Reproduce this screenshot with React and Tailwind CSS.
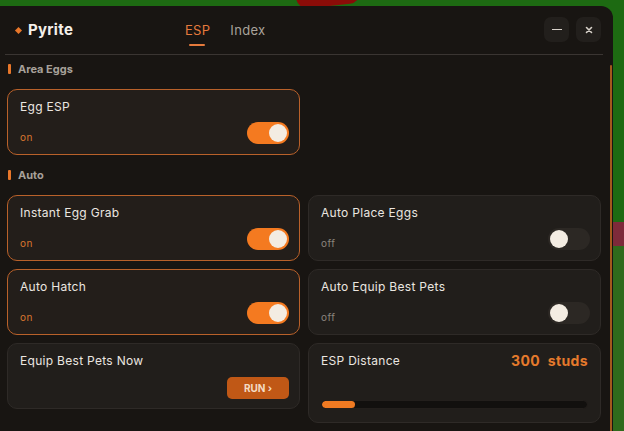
import { useState } from 'react';

const font = { fontFamily: 'Inter, "Noto Sans", sans-serif' };

const Toggle = ({ on, onClick }) => (
  <button
    onClick={onClick}
    className={`w-[42px] h-[22px] rounded-full flex items-center px-[2px] ${
      on ? 'bg-[#f47a20] justify-end' : 'bg-[#2c2824] justify-start'
    }`}
  >
    <span className="w-[18px] h-[18px] rounded-full bg-[#f3ece2]" />
  </button>
);

const ToggleCard = ({ title, on, onToggle }) => (
  <div
    className={`h-[66px] rounded-[10px] border flex flex-col justify-between pl-[12px] pr-[10px] pt-[9px] pb-[10px] ${
      on ? 'border-[#b9612a] bg-[#231e1a]' : 'border-[#2e2a27] bg-[#211e1b]'
    }`}
  >
    <div className="text-[12px] leading-[16px] text-[#ebe6e0] tracking-[0.3px]">{title}</div>
    <div className="flex items-end justify-between">
      <span className={`text-[10px] leading-[12px] mb-[1px] tracking-[0.5px] ${on ? 'text-[#d9762f]' : 'text-[#8b847d]'}`}>
        {on ? 'on' : 'off'}
      </span>
      <Toggle on={on} onClick={onToggle} />
    </div>
  </div>
);

const Section = ({ label }) => (
  <div className="flex items-center gap-[7px] h-[14px] pl-[1px]">
    <span className="w-[3px] h-[10px] bg-[#e8772a] rounded-[1px]" />
    <span className="text-[11px] font-bold text-[#a7a19a]">{label}</span>
  </div>
);

export default function App() {
  const [state, setState] = useState({
    eggEsp: true,
    instantGrab: true,
    autoPlace: false,
    autoHatch: true,
    autoEquip: false,
  });
  const [tab, setTab] = useState('ESP');
  const distance = 300;
  const flip = (k) => setState((s) => ({ ...s, [k]: !s[k] }));

  return (
    <div className="relative w-[624px] h-[431px] overflow-hidden bg-[#1d6a12]" style={font}>
      {/* game scene behind the window */}
      <div className="absolute left-[296px] -top-[16px] w-[64px] h-[22px] rounded-full -rotate-6 bg-[#8a0c08]" />
      <div className="absolute left-[612px] top-[222px] w-[20px] h-[24px] bg-[#7d2a3a]" />
      <div className="absolute left-[612px] top-[246px] w-[20px] h-[185px] bg-[#2f6a1c]" />

      {/* window */}
      <div className="absolute left-0 top-[6px] w-[613px] h-[440px] bg-[#181512] rounded-tr-[12px] flex flex-col">
        <div className="h-[48px] flex items-center px-[12px] relative">
          <div className="flex items-center gap-[7px] w-[170px]">
            <span className="w-[5px] h-[5px] rotate-45 bg-[#e8772a] ml-[4px]" />
            <span className="text-[15px] font-bold text-[#f4f0ea] tracking-[0.3px]">Pyrite</span>
          </div>
          <div className="flex items-center gap-[20px] ml-[3px] mt-[1px]">
            {['ESP', 'Index'].map((t) => (
              <button
                key={t}
                onClick={() => setTab(t)}
                className={`relative text-[13px] tracking-[0.3px] ${tab === t ? 'text-[#e57a3c]' : 'text-[#a9a39b]'}`}
              >
                {t}
                {tab === t && (
                  <span className="absolute left-[4px] right-[5px] -bottom-[6px] h-[2px] rounded bg-[#e57a3c]" />
                )}
              </button>
            ))}
          </div>
          <div className="ml-auto flex gap-[7px] -mt-[1px]">
            <button className="w-[25px] h-[25px] rounded-[7px] bg-[#221f1c] flex items-center justify-center">
              <span className="w-[10px] h-[1.5px] bg-[#d8d2ca]" />
            </button>
            <button className="w-[25px] h-[25px] rounded-[7px] bg-[#221f1c] flex items-center justify-center">
              <svg width="8" height="8" viewBox="0 0 8 8" stroke="#d8d2ca" strokeWidth="1.6" strokeLinecap="round">
                <path d="M1.5 1.5l5 5M6.5 1.5l-5 5" />
              </svg>
            </button>
          </div>
        </div>
        <div className="h-px bg-[#3a3532] ml-[5px] mr-[10px]" />

        <div className="flex-1 pl-[7px] pr-[12px] pt-[7px] relative">
          <Section label="Area Eggs" />
          <div className="grid grid-cols-2 gap-[8px] mt-[13px]">
            <ToggleCard title="Egg ESP" on={state.eggEsp} onToggle={() => flip('eggEsp')} />
          </div>

          <div className="mt-[13px]">
            <Section label="Auto" />
          </div>
          <div className="grid grid-cols-2 gap-[8px] mt-[13px] items-start">
            <ToggleCard title="Instant Egg Grab" on={state.instantGrab} onToggle={() => flip('instantGrab')} />
            <ToggleCard title="Auto Place Eggs" on={state.autoPlace} onToggle={() => flip('autoPlace')} />
            <ToggleCard title="Auto Hatch" on={state.autoHatch} onToggle={() => flip('autoHatch')} />
            <ToggleCard title="Auto Equip Best Pets" on={state.autoEquip} onToggle={() => flip('autoEquip')} />

            <div className="h-[66px] rounded-[10px] border border-[#2e2a27] bg-[#211e1b] flex flex-col justify-between pl-[12px] pr-[10px] pt-[9px] pb-[9px]">
              <div className="text-[12px] leading-[16px] text-[#ebe6e0] tracking-[0.3px]">Equip Best Pets Now</div>
              <div className="flex justify-end">
                <button className="w-[62px] h-[22px] rounded-[5px] bg-[#c05816] text-[10px] font-bold text-[#f4dcc4]">
                  RUN ›
                </button>
              </div>
            </div>

            <div className="h-[80px] rounded-[10px] border border-[#2e2a27] bg-[#211e1b] flex flex-col justify-between pl-[12px] pr-[12px] pt-[9px] pb-[13px]">
              <div className="flex items-center justify-between h-[16px]">
                <span className="text-[12px] leading-[16px] text-[#ebe6e0] tracking-[0.3px]">ESP Distance</span>
                <span className="text-[14px] leading-[16px] font-bold text-[#e57a2c] tracking-[0.4px]">{distance}&nbsp; studs</span>
              </div>
              <div className="h-[9px] rounded-full bg-[#12100e] border border-[#231f1c] overflow-hidden">
                <div className="h-full rounded-full bg-[#f07a22]" style={{ width: `${(distance / 2400) * 100}%` }} />
              </div>
            </div>
          </div>

          {/* scrollbar */}
          <div className="absolute right-[1px] top-[10px] w-[2px] h-[400px] rounded bg-[#a3581c]" />
        </div>
      </div>
    </div>
  );
}
